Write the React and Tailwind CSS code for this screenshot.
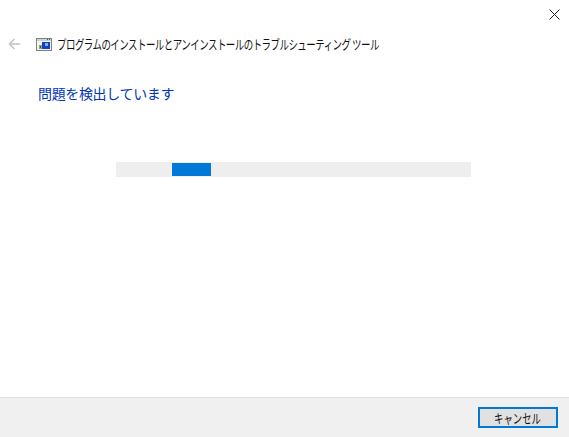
const JP = { fontFamily: '"Noto Sans CJK JP", sans-serif' }

function BackArrow() {
  return (
    <svg width="13" height="12" viewBox="0 0 13 12" fill="none" stroke="#c4c4c4" strokeWidth="1.6">
      <path d="M12.5 6H1.5M6.5 1L1.5 6L6.5 11" />
    </svg>
  )
}

function CloseIcon() {
  return (
    <svg width="11" height="11" viewBox="0 0 11 11" fill="none" stroke="#1a1a1a" strokeWidth="1">
      <path d="M0.5 0.5L10.5 10.5M10.5 0.5L0.5 10.5" />
    </svg>
  )
}

function TroubleshootIcon() {
  return (
    <svg width="16" height="13" viewBox="0 0 16 13" shapeRendering="crispEdges">
      <rect x="0.5" y="0.5" width="15" height="12" fill="#f4f4f4" stroke="#7f7f7f" />
      <rect x="1" y="1" width="14" height="2" fill="#c9d3de" />
      <rect x="11" y="1" width="1" height="1" fill="#555" />
      <rect x="13" y="1" width="1" height="1" fill="#555" />
      <rect x="6" y="4" width="8" height="7" fill="#1540c0" />
      <rect x="9" y="5" width="3" height="3" fill="#7fb0f0" />
      <rect x="3" y="7" width="3" height="4" fill="#7fae6a" />
      <rect x="4" y="8" width="1" height="2" fill="#2f6b2f" />
    </svg>
  )
}

export default function App() {
  return (
    <div className="w-[569px] h-[437px] bg-white flex flex-col overflow-hidden" style={JP}>
      <div className="flex justify-end pt-[9px] pr-[9px] h-[32px]">
        <CloseIcon />
      </div>

      <div className="flex items-center h-[24px] pl-[8px]">
        <BackArrow />
        <div className="ml-[15px]">
          <TroubleshootIcon />
        </div>
        <span className="ml-[5px] text-[13px] leading-[24px] tracking-[-0.72px] text-[#111111] whitespace-nowrap origin-left scale-x-[0.728]">
          プログラムのインストールとアンインストールのトラブルシューティング ツール
        </span>
      </div>

      <h1 className="mt-[25px] ml-[38px] text-[14px] leading-[24px] tracking-[-0.35px] font-normal text-[#0036b8] whitespace-nowrap">
        問題を検出しています
      </h1>

      <div className="mt-[57px] ml-[116px] w-[355px] h-[15px] bg-[#eeeeee] py-px">
        <div className="ml-[56px] w-[39px] h-full bg-[#0078d7]" />
      </div>

      <div className="flex-1" />

      <div className="h-[40px] bg-[#f0f0f0] border-t border-[#dfdfdf] flex items-start justify-end pt-[9px] pr-[11px]">
        <button className="w-[80px] h-[21px] bg-[#e1e1e1] border-2 border-[#0078d7] text-[13px] leading-[16px] text-[#111111]">
          <span className="inline-block scale-x-[0.72]">キャンセル</span>
        </button>
      </div>
    </div>
  )
}
